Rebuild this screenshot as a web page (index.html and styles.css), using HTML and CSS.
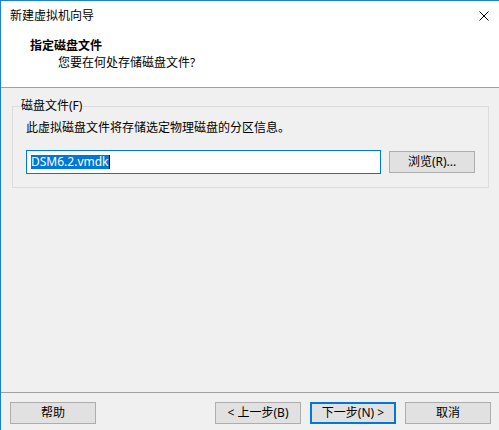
FILE: index.html
```html
<!DOCTYPE html>
<html lang="zh-CN">
<head>
<meta charset="utf-8">
<title>新建虚拟机向导</title>
<link rel="stylesheet" href="styles.css">
</head>
<body>
<div class="window">
  <div class="top">
    <div class="titlebar">
      <span class="title">新建虚拟机向导</span>
      <svg class="close" width="10" height="10" viewBox="0 0 10 10"><path d="M0.5 0.5L9.5 9.5M9.5 0.5L0.5 9.5" stroke="#000" stroke-width="1" fill="none"/></svg>
    </div>
    <div class="header">
      <div class="h1">指定磁盘文件</div>
      <div class="h2">您要在何处存储磁盘文件?</div>
    </div>
  </div>
  <div class="body">
    <fieldset class="group">
      <legend>磁盘文件(F)</legend>
      <p class="desc">此虚拟磁盘文件将存储选定物理磁盘的分区信息。</p>
      <div class="row">
        <div class="textbox"><span class="sel">DSM6.2.vmdk</span><span class="caret"></span></div>
        <button class="btn">浏览(R)...</button>
      </div>
    </fieldset>
  </div>
  <div class="footer">
    <button class="btn">帮助</button>
    <div class="spacer"></div>
    <button class="btn">&lt; 上一步(B)</button>
    <button class="btn primary">下一步(N) &gt;</button>
    <button class="btn">取消</button>
  </div>
</div>
</body>
</html>
```
FILE: styles.css
```css
html, body {
  margin: 0;
  padding: 0;
}
body {
  width: 499px;
  height: 430px;
  overflow: hidden;
  background: #f0f0f0;
  font-family: "Noto Sans", "Noto Sans CJK SC", sans-serif;
  font-size: 12px;
  color: #000;
}
.window {
  box-sizing: border-box;
  width: 499px;
  height: 430px;
  border-left: 1px solid #1883d7;
  border-top: 1px solid #1883d7;
  display: flex;
  flex-direction: column;
  background: #f0f0f0;
}
.top {
  box-sizing: border-box;
  height: 87px;
  background: #fff;
  border-bottom: 1px solid #a0a0a0;
}
.titlebar {
  height: 29px;
  display: flex;
  align-items: center;
  padding-left: 9px;
  padding-right: 10px;
}
.title {
  flex: 1;
  line-height: 16px;
  padding-top: 1px;
}
.close {
  display: block;
  margin-top: 1px;
}
.header {
  padding-top: 8px;
}
.h1 {
  font-weight: bold;
  line-height: 16px;
  padding-left: 29px;
}
.h2 {
  line-height: 16px;
  margin-top: 1px;
  padding-left: 57px;
}
.body {
  flex: 1;
}
.group {
  margin: 10px 10px 0 11px;
  padding: 0 13px 13px 13px;
  border: 1px solid #dcdcdc;
  min-width: 0;
}
.group legend {
  line-height: 16px;
  padding: 0 1px;
  margin-left: -6px;
}
.desc {
  margin: 6px 0 0 0;
  line-height: 16px;
}
.row {
  display: flex;
  align-items: center;
  margin-top: 14px;
}
.textbox {
  box-sizing: border-box;
  width: 356px;
  height: 24px;
  border: 1px solid #0078d7;
  background: #fff;
  padding-left: 4px;
  display: flex;
  align-items: center;
}
.sel {
  background: #0078d7;
  color: #fff;
  line-height: 14px;
  height: 14px;
}
.caret {
  width: 1px;
  height: 14px;
  background: #000;
}
.btn {
  box-sizing: border-box;
  width: 86px;
  height: 22px;
  margin: 0;
  padding: 0;
  border: 1px solid #adadad;
  background: #e1e1e1;
  font-family: inherit;
  font-size: 12px;
  color: #000;
  line-height: 18px;
}
.row .btn {
  margin-left: 8px;
}
.footer {
  box-sizing: border-box;
  height: 38px;
  border-top: 1px solid #a0a0a0;
  padding: 9px 8px 6px 9px;
  display: flex;
  gap: 9px;
}
.spacer {
  flex: 1;
}
.btn.primary {
  border: 2px solid #0078d7;
}
```
